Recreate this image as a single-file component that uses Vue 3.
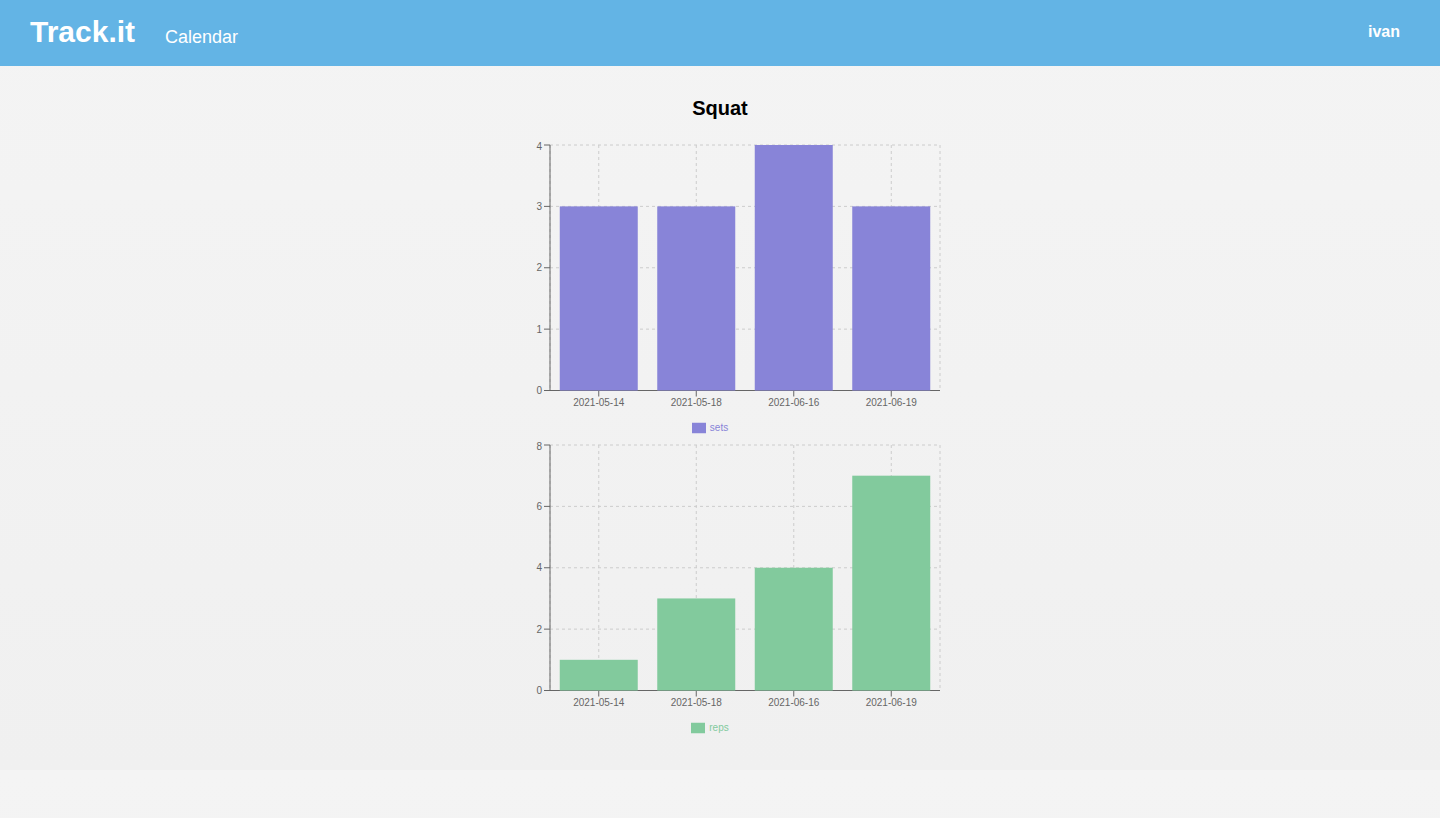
<script setup>
const dates = ['2021-05-14', '2021-05-18', '2021-06-16', '2021-06-19']

const left = 80
const right = 470
const top = 5
const bottom = 250.5
const band = (right - left) / dates.length

const series = [
  { name: 'sets', color: '#8884d8', values: [3, 3, 4, 3], ticks: [0, 1, 2, 3, 4] },
  { name: 'reps', color: '#82ca9d', values: [1, 3, 4, 7], ticks: [0, 2, 4, 6, 8] }
]

const charts = series.map((s) => {
  const max = s.ticks[s.ticks.length - 1]
  const scale = (v) => bottom - (v / max) * (bottom - top)
  return {
    ...s,
    rows: s.ticks.map((v) => ({
      value: v,
      y: scale(v),
      labelY: Math.max(scale(v), top + 1) + 3.5
    })),
    bars: s.values.map((v, i) => ({
      date: dates[i],
      x: left + band * (i + 0.1),
      center: left + band * (i + 0.5),
      y: scale(v),
      width: band * 0.8,
      height: bottom - scale(v)
    }))
  }
})
</script>

<template>
  <header class="bar">
    <nav class="nav">
      <a class="brand" href="#">Track.it</a>
      <a class="link" href="#">Calendar</a>
    </nav>
    <a class="user" href="#">ivan</a>
  </header>
  <main class="content">
    <h1 class="title">Squat</h1>
    <figure v-for="c in charts" :key="c.name" class="chart">
      <svg class="plot" viewBox="0 0 500 276" role="img" :aria-label="c.name">
        <g class="grid">
          <line v-for="r in c.rows" :key="r.value" :x1="left" :x2="right" :y1="r.y" :y2="r.y" />
          <line v-for="b in c.bars" :key="b.date" :x1="b.center" :x2="b.center" :y1="top" :y2="bottom" />
          <line :x1="left" :x2="left" :y1="top" :y2="bottom" />
          <line :x1="right" :x2="right" :y1="top" :y2="bottom" />
        </g>
        <g class="axis">
          <line :x1="left" :x2="right" :y1="bottom" :y2="bottom" />
          <line v-for="b in c.bars" :key="b.date" :x1="b.center" :x2="b.center" :y1="bottom" :y2="bottom + 6" />
          <line :x1="left" :x2="left" :y1="top" :y2="bottom" />
          <line v-for="r in c.rows" :key="r.value" :x1="left - 6" :x2="left" :y1="r.y" :y2="r.y" />
        </g>
        <g class="labels">
          <text v-for="b in c.bars" :key="b.date" :x="b.center" y="266" text-anchor="middle">{{ b.date }}</text>
          <text v-for="r in c.rows" :key="r.value" :x="left - 8" :y="r.labelY" text-anchor="end">{{ r.value }}</text>
        </g>
        <rect v-for="b in c.bars" :key="b.date" :x="b.x" :y="b.y" :width="b.width" :height="b.height" :fill="c.color" />
      </svg>
      <figcaption class="legend" :style="{ color: c.color }">
        <svg class="swatch" viewBox="0 0 32 32" aria-hidden="true">
          <path d="M0 4h32v24H0z" fill="currentColor" />
        </svg>
        <span>{{ c.name }}</span>
      </figcaption>
    </figure>
  </main>
</template>

<style>
body {
  margin: 0;
  background: linear-gradient(#f4f4f4, #f0f0f0);
  font-family: Helvetica, "Liberation Sans", Arial, sans-serif;
}
</style>

<style scoped>
.bar {
  display: flex;
  align-items: center;
  justify-content: space-between;
  box-sizing: border-box;
  min-height: 66px;
  padding: 0 40px 2px 30px;
  background: #63b4e5;
}
.nav {
  display: flex;
  align-items: flex-end;
  gap: 30px;
}
.bar a {
  color: #fff;
  text-decoration: none;
}
.brand {
  font-size: 30px;
  font-weight: 700;
  line-height: 34px;
}
.link {
  font-size: 18px;
  line-height: 24px;
}
.user {
  font-size: 16px;
  font-weight: 700;
}
.content {
  display: flex;
  flex-direction: column;
  align-items: center;
  padding: 30px 0;
}
.title {
  margin: 0 0 20px;
  font-size: 20px;
  line-height: 24px;
  color: #000;
}
.chart {
  width: 100%;
  max-width: 500px;
  margin: 0;
}
.plot {
  display: block;
  width: 100%;
}
.grid line {
  stroke: #ccc;
  stroke-dasharray: 3 3;
}
.axis line {
  stroke: #666;
}
.labels {
  fill: #666;
  font-size: 10px;
}
.legend {
  display: flex;
  align-items: center;
  justify-content: center;
  gap: 4px;
  height: 24px;
  padding: 0 20px 0 0;
  font-size: 10px;
  line-height: 20px;
}
.swatch {
  width: 14px;
  height: 14px;
}
</style>
